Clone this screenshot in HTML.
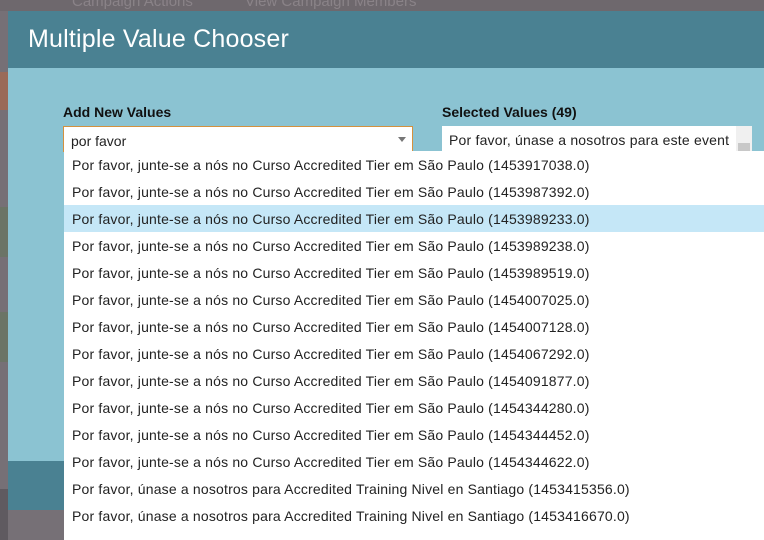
<!DOCTYPE html>
<html><head><style>
body{margin:0;width:764px;height:540px;overflow:hidden;background:#767076;font-family:"Liberation Sans",sans-serif;position:relative}
.a{position:absolute}
.row{height:27px;line-height:28px;padding-left:8px;font-size:14px;color:#222;white-space:nowrap;letter-spacing:0.18px}
</style></head><body>
<div class="a" style="left:0;top:0;width:764px;height:11px;background:#6e686d;color:#8a8388;font-size:15px;overflow:hidden"><span style="position:absolute;left:72px;top:-7px">Campaign Actions</span><span style="position:absolute;left:245px;top:-7px">View Campaign Members</span></div>
<div class="a" style="left:0;top:72px;width:8px;height:38px;background:#9a6a58"></div>
<div class="a" style="left:0;top:207px;width:8px;height:50px;background:#6b7466"></div>
<div class="a" style="left:0;top:312px;width:8px;height:50px;background:#6b7466"></div>
<div class="a" style="left:0;top:489px;width:8px;height:51px;background:#5f5a60"></div>
<div class="a" style="left:8px;top:11px;width:756px;height:57px;background:#4a8192"></div>
<div class="a" style="left:28px;top:25px;color:#fff;font-size:25px;letter-spacing:0.2px">Multiple Value Chooser</div>
<div class="a" style="left:8px;top:68px;width:756px;height:393px;background:#8bc3d2"></div>
<div class="a" style="left:8px;top:461px;width:756px;height:49px;background:#4a8192"></div>
<div class="a" style="left:63px;top:104px;font-weight:bold;font-size:14px;color:#111">Add New Values</div>
<div class="a" style="left:442px;top:104px;font-weight:bold;font-size:14px;color:#111">Selected Values (49)</div>
<div class="a" style="left:63px;top:126px;width:348px;height:25px;background:#fff;border:1px solid #d4913e;border-bottom:none"><span style="position:absolute;left:7px;top:6px;font-size:14px;color:#222">por favor</span><span style="position:absolute;right:6px;top:10px;border-left:4px solid transparent;border-right:4px solid transparent;border-top:5px solid #777"></span></div>
<div class="a" style="left:442px;top:126px;width:310px;height:26px;background:#fff;overflow:hidden"><span style="position:absolute;left:7px;top:6px;font-size:14px;color:#222;white-space:nowrap;letter-spacing:0.2px">Por favor, únase a nosotros para este event</span><span style="position:absolute;right:0;top:0;width:16px;height:26px;background:#f0f0f0"></span><span style="position:absolute;right:2px;top:17px;width:12px;height:9px;background:#c8c8c8"></span></div>
<div class="a" style="left:64px;top:151px;width:700px;height:389px;background:#fff">
<div class="row">Por favor, junte-se a nós no Curso Accredited Tier em São Paulo (1453917038.0)</div>
<div class="row">Por favor, junte-se a nós no Curso Accredited Tier em São Paulo (1453987392.0)</div>
<div class="row" style="background:#c5e7f7">Por favor, junte-se a nós no Curso Accredited Tier em São Paulo (1453989233.0)</div>
<div class="row">Por favor, junte-se a nós no Curso Accredited Tier em São Paulo (1453989238.0)</div>
<div class="row">Por favor, junte-se a nós no Curso Accredited Tier em São Paulo (1453989519.0)</div>
<div class="row">Por favor, junte-se a nós no Curso Accredited Tier em São Paulo (1454007025.0)</div>
<div class="row">Por favor, junte-se a nós no Curso Accredited Tier em São Paulo (1454007128.0)</div>
<div class="row">Por favor, junte-se a nós no Curso Accredited Tier em São Paulo (1454067292.0)</div>
<div class="row">Por favor, junte-se a nós no Curso Accredited Tier em São Paulo (1454091877.0)</div>
<div class="row">Por favor, junte-se a nós no Curso Accredited Tier em São Paulo (1454344280.0)</div>
<div class="row">Por favor, junte-se a nós no Curso Accredited Tier em São Paulo (1454344452.0)</div>
<div class="row">Por favor, junte-se a nós no Curso Accredited Tier em São Paulo (1454344622.0)</div>
<div class="row">Por favor, únase a nosotros para Accredited Training Nivel en Santiago (1453415356.0)</div>
<div class="row">Por favor, únase a nosotros para Accredited Training Nivel en Santiago (1453416670.0)</div>
</div>
</body></html>
